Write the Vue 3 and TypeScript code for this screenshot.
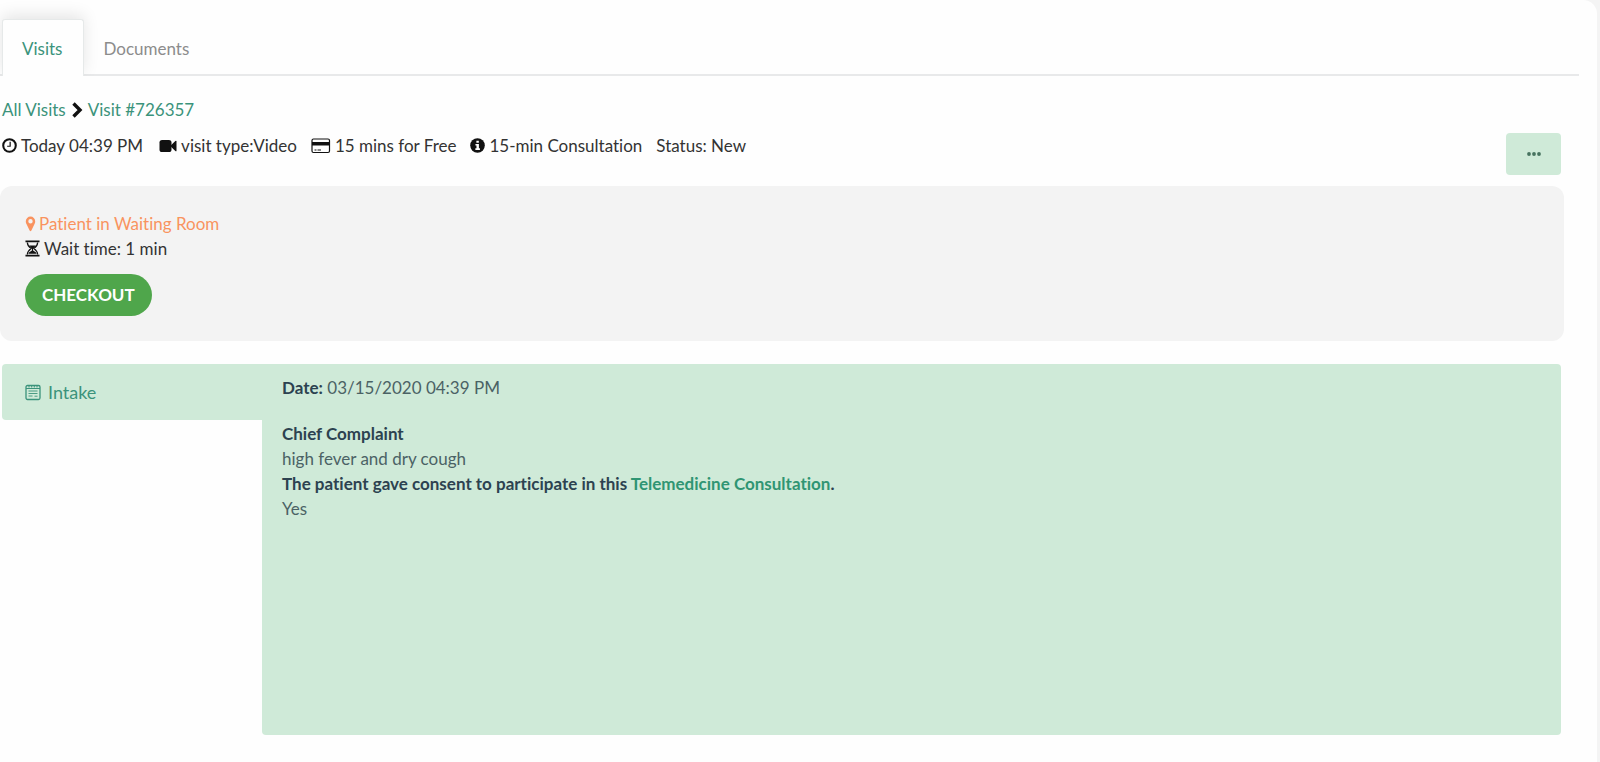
<script setup lang="ts">
import { ref } from 'vue'

interface Tab {
  id: string
  label: string
}

const tabs: Tab[] = [
  { id: 'visits', label: 'Visits' },
  { id: 'documents', label: 'Documents' },
]
const activeTab = ref('visits')
</script>

<template>
  <main class="card">
    <div class="tabs" role="tablist">
      <button
        v-for="tab in tabs"
        :key="tab.id"
        type="button"
        role="tab"
        class="tab"
        :class="{ active: tab.id === activeTab }"
        :aria-selected="tab.id === activeTab"
        @click="activeTab = tab.id"
      >
        {{ tab.label }}
      </button>
    </div>

    <div class="content">
      <nav class="crumbs" aria-label="Breadcrumb">
        <a href="#all">All Visits</a>
        <svg class="chevron" viewBox="0 0 12 16" aria-hidden="true">
          <path d="M2.500 1.500 9 8l-6.500 6.500" fill="none" stroke="currentColor" stroke-width="3.400" />
        </svg>
        <a href="#visit">Visit #726357</a>
      </nav>

      <div class="info">
        <ul class="meta">
          <li>
            <svg class="icon-clock" viewBox="0 0 16 16" aria-hidden="true">
              <circle cx="8" cy="8" r="6.700" fill="none" stroke="currentColor" stroke-width="2.200" />
              <path d="M8.700 4v4.800H5.500" fill="none" stroke="currentColor" stroke-width="1.300" />
            </svg>
            <span>Today 04:39 PM</span>
          </li>
          <li class="video">
            <svg class="icon-video" viewBox="0 0 18 14" aria-hidden="true">
              <rect x="0.500" y="1" width="12" height="12" rx="2.600" />
              <path d="M12 6.200 16.300 2q1.200-.8 1.200.6v8.800q0 1.400-1.200.6L12 7.800z" />
            </svg>
            <span>visit type:Video</span>
          </li>
          <li>
            <svg class="icon-card" viewBox="0 0 20 16" aria-hidden="true">
              <rect x="1" y="1" width="17.500" height="13.500" rx="1.500" fill="#fff" stroke="currentColor" stroke-width="1.200" />
              <path d="M1 4h17.500v3.500H1z" />
              <path d="M3.500 12h2M6.500 12h3.500" fill="none" stroke="currentColor" />
            </svg>
            <span>15 mins for Free</span>
          </li>
          <li>
            <svg class="icon-info" viewBox="0 0 16 16" aria-hidden="true">
              <circle cx="8" cy="8" r="7.800" />
              <path d="M6.800 2.800h2.600v2.200H6.800zM5.800 6.300h3.700v4.700h1.100v1.700H5.700V11h1.200V8H5.800z" fill="#fff" />
            </svg>
            <span>15-min Consultation</span>
          </li>
          <li>Status: New</li>
        </ul>
        <button type="button" class="more" aria-label="More actions">
          <svg viewBox="0 0 14 4" aria-hidden="true">
            <circle cx="2" cy="2" r="1.900" />
            <circle cx="7" cy="2" r="1.900" />
            <circle cx="12" cy="2" r="1.900" />
          </svg>
        </button>
      </div>

      <section class="waiting">
        <p class="room">
          <svg class="icon-pin" viewBox="0 0 10 16" aria-hidden="true">
            <path
              fill-rule="evenodd"
              d="M5 .5A4.700 4.700 0 0 0 .3 5.200c0 1.300.3 2 .8 3.100l3 6.300q.9 1.500 1.800 0l3-6.300c.5-1.100.8-1.800.8-3.100A4.700 4.700 0 0 0 5 .5zM5 3a2.200 2.200 0 1 1 0 4.400A2.200 2.200 0 0 1 5 3z"
            />
          </svg>
          <span>Patient in Waiting Room</span>
        </p>
        <p>
          <svg class="icon-glass" viewBox="0 0 16 18" aria-hidden="true">
            <path d="M.5.500h15v1.800H.5zM.5 15.700h15v1.800H.5z" />
            <path
              d="M2.500 2.500C2.500 6 4.500 7.500 6.500 9 4.500 10.500 2.500 12 2.500 15.500M13.500 2.500C13.500 6 11.500 7.500 9.500 9c2 1.500 4 3 4 6.500"
              fill="none"
              stroke="currentColor"
              stroke-width="1.300"
            />
            <path d="M4.500 5.800h7L8.600 9.200v1.800l3.600 2.500v1H3.800v-1L7.400 11V9.200z" />
          </svg>
          <span>Wait time: 1 min</span>
        </p>
        <button type="button" class="checkout">CHECKOUT</button>
      </section>

      <section class="record">
        <button type="button" class="intake">
          <svg class="icon-note" viewBox="0 0 16 17" aria-hidden="true">
            <g fill="none" stroke="currentColor">
              <rect x="1" y="1.500" width="14" height="14" rx="1.500" stroke-width="1.300" />
              <path d="M1 4.500h14M4 1v2.500M6.700 1v2.500M9.300 1v2.500M12 1v2.500" />
              <path d="M3.500 7h9M3.500 9.500h9M3.500 12h4M9.500 12.200h3" stroke-width="0.900" />
            </g>
          </svg>
          <span>Intake</span>
        </button>
        <div class="details">
          <p class="date"><b>Date:</b> 03/15/2020 04:39 PM</p>
          <dl>
            <dt>Chief Complaint</dt>
            <dd>high fever and dry cough</dd>
            <dt>
              The patient gave consent to participate in this
              <a href="#consent">Telemedicine Consultation</a>.
            </dt>
            <dd>Yes</dd>
          </dl>
        </div>
      </section>
    </div>
  </main>
</template>

<style>
body {
  margin: 0;
  background: #f4f4f4;
}
</style>

<style scoped>
.card {
  box-sizing: border-box;
  min-height: 100vh;
  margin-right: 3px;
  padding: 19px 18px 26px 0;
  border-radius: 0 14px 0 0;
  background: #fefefe;
  color: #333;
  font: 17px/25px Lato, sans-serif;
  font-variant-ligatures: none;
}

button {
  border: 0;
  font: inherit;
  font-variant-ligatures: none;
  cursor: pointer;
}

svg {
  flex: none;
  fill: currentColor;
}

a {
  color: #3b937b;
  text-decoration: none;
}

p,
ul,
dl,
dd {
  margin: 0;
  padding: 0;
}

.tabs {
  display: flex;
  padding-left: 2px;
  border-bottom: 2px solid #e8e9ea;
}

.tab {
  margin-bottom: -2px;
  padding: 16px 20px 15px 19px;
  border: 1px solid transparent;
  border-bottom: 0;
  background: none;
  color: #8c8c8c;
}

.tab.active {
  border-color: #e6e9e9;
  border-radius: 3px 3px 0 0;
  background: #fefefe;
  box-shadow: 0 -4px 16px rgba(0, 0, 0, 0.1);
  clip-path: inset(-20px -20px 0 -2px);
  color: #3b937b;
}

.content {
  padding: 21px 18px 0 2px;
}

.crumbs {
  display: flex;
  align-items: center;
  gap: 5px;
}

.chevron {
  width: 12px;
  height: 16px;
  color: #111;
}

.info {
  display: flex;
  align-items: flex-start;
  justify-content: space-between;
  margin-top: 11px;
}

.meta {
  display: flex;
  flex-wrap: wrap;
  gap: 14px;
  list-style: none;
}

.meta li,
.waiting p {
  display: flex;
  align-items: center;
  gap: 4px;
}

.meta .video {
  margin-left: 2px;
}

.meta svg {
  color: #111;
}

.icon-clock,
.icon-info {
  width: 15px;
  height: 15px;
}

.icon-video {
  width: 18px;
  height: 14px;
}

.icon-card {
  width: 20px;
  height: 16px;
}

.more {
  display: flex;
  align-items: center;
  justify-content: center;
  width: 55px;
  height: 42px;
  border-radius: 4px;
  background: #cfead8;
  color: #47735f;
}

.more svg {
  width: 14px;
  height: 4px;
}

.waiting {
  margin: 11px -3px 0 -2px;
  padding: 25px;
  border-radius: 12px;
  background: #f3f3f3;
}

.waiting .room {
  gap: 3px;
  color: #f9935f;
}

.icon-pin {
  width: 11px;
  height: 16px;
}

.icon-glass {
  width: 15px;
  height: 17px;
  color: #111;
}

.checkout {
  display: block;
  margin-top: 13px;
  padding: 8px 17px 9px;
  border-radius: 21px;
  background: #4fa64b;
  color: #fff;
  font-weight: 700;
}

.record {
  display: flex;
  align-items: flex-start;
  margin-top: 23px;
}

.intake {
  display: flex;
  align-items: center;
  gap: 7px;
  width: 260px;
  padding: 16px 23px 15px;
  border-radius: 4px 0 0 4px;
  background: #cfead8;
  color: #3b937b;
  font-size: 18px;
}

.icon-note {
  width: 16px;
  height: 17px;
}

.details {
  box-sizing: border-box;
  flex: 1;
  min-height: 371px;
  padding: 11px 20px;
  border-radius: 0 4px 4px 4px;
  background: #cfead8;
  color: #4b6265;
}

.date {
  margin-bottom: 21px;
}

.details b,
.details dt {
  color: #2c4250;
  font-weight: 700;
}

.details a {
  color: #2f9573;
}
</style>
